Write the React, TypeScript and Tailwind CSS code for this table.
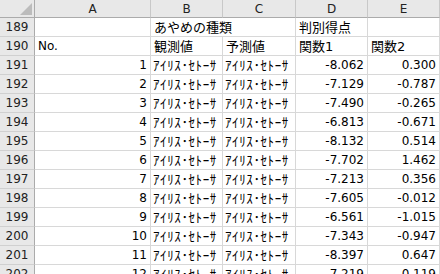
import React from "react";

const rows: [number, number, string, string][] = [
  [191, 1, "-8.062", "0.300"],
  [192, 2, "-7.129", "-0.787"],
  [193, 3, "-7.490", "-0.265"],
  [194, 4, "-6.813", "-0.671"],
  [195, 5, "-8.132", "0.514"],
  [196, 6, "-7.702", "1.462"],
  [197, 7, "-7.213", "0.356"],
  [198, 8, "-7.605", "-0.012"],
  [199, 9, "-6.561", "-1.015"],
  [200, 10, "-7.343", "-0.947"],
  [201, 11, "-8.397", "0.647"],
  [202, 12, "-7.219", "0.119"],
];

const KANA = "ｱｲﾘｽ･ｾﾄｰｻ";

const rh =
  "h-[19px] border-r border-b border-r-[#ababab] border-b-[#d0d0d0] bg-[#e8e8e8] flex items-center justify-center text-[#222]";
const cell = "h-[19px] border-r border-b border-[#d8d8d8] flex items-center px-[3px] overflow-visible whitespace-nowrap";
const colH =
  "h-[18px] border-r border-b border-r-[#c8c8c8] border-b-[#ababab] bg-[#e8e8e8] flex items-center justify-center text-[#222]";
const jp = "text-[13px]";

export default function App() {
  return (
    <div
      className="w-[440px] h-[274px] overflow-hidden bg-white text-[12px] leading-none text-black"
      style={{ fontFamily: '"DejaVu Sans", "Noto Sans CJK JP", sans-serif' }}
    >
      <div className="grid grid-cols-[35px_116px_72px_73px_72px_72px]">
        <div className="h-[18px] border-r border-b border-r-[#ababab] border-b-[#ababab] bg-[#e8e8e8] relative">
          <div className="absolute right-[2px] bottom-[2px] w-0 h-0 border-l-[12px] border-l-transparent border-b-[12px] border-b-[#bcbcbc]" />
        </div>
        <div className={colH}>A</div>
        <div className={colH}>B</div>
        <div className={colH}>C</div>
        <div className={colH}>D</div>
        <div className={colH}>E</div>

        <div className={rh}>189</div>
        <div className={cell}></div>
        <div className={"h-[19px] border-b border-[#d8d8d8] flex items-center px-[3px] whitespace-nowrap relative z-10 " + jp}>あやめの種類</div>
        <div className={cell}></div>
        <div className={cell + " " + jp}>判別得点</div>
        <div className={cell}></div>

        <div className={rh}>190</div>
        <div className={cell}>No.</div>
        <div className={cell + " " + jp}>観測値</div>
        <div className={cell + " " + jp}>予測値</div>
        <div className={cell + " " + jp}>関数1</div>
        <div className={cell + " " + jp}>関数2</div>

        {rows.map(([r, n, d, e]) => (
          <React.Fragment key={r}>
            <div className={rh}>{r}</div>
            <div className={cell + " justify-end"}>{n}</div>
            <div className={cell + " !px-[2px]"}>
              <span className="text-[13px] tracking-[0.6px]">{KANA}</span>
            </div>
            <div className={cell + " !px-[2px]"}>
              <span className="text-[13px] tracking-[0.6px]">{KANA}</span>
            </div>
            <div className={cell + " justify-end"}>{d}</div>
            <div className={cell + " justify-end"}>{e}</div>
          </React.Fragment>
        ))}
      </div>
    </div>
  );
}
